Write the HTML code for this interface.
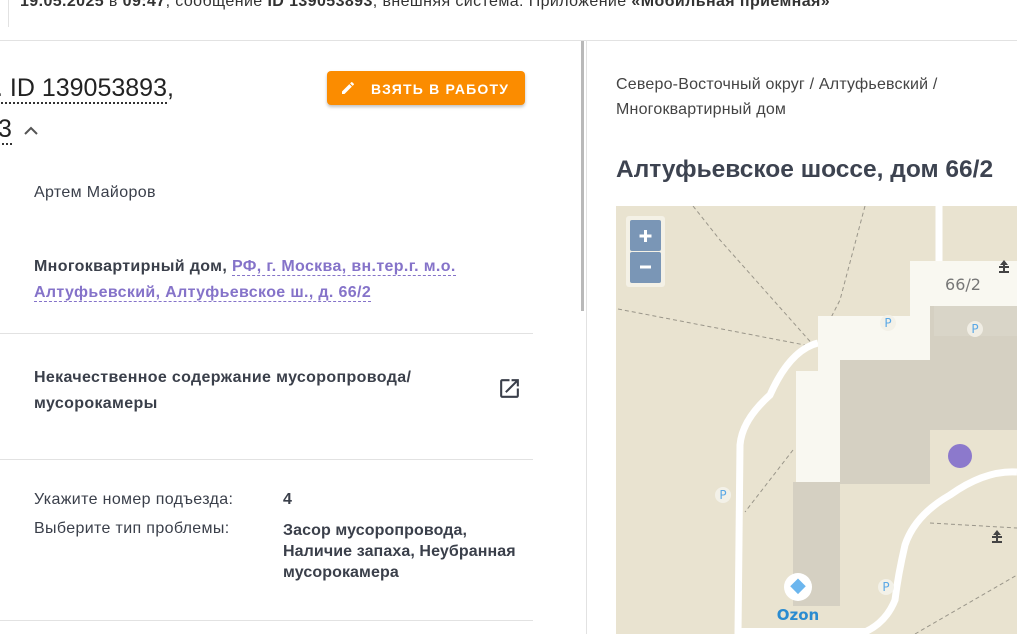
<!DOCTYPE html>
<html><head><meta charset="utf-8"><style>
*{margin:0;padding:0;box-sizing:border-box}
body{width:1017px;height:634px;overflow:hidden;background:#fff;font-family:"Liberation Sans",sans-serif;color:#3a3f4a;position:relative}
.a{position:absolute;white-space:nowrap}
.hr{position:absolute;height:1px;background:#e2e2e2}
b{font-weight:bold}
.lk{color:#8573c9;font-weight:bold;border-bottom:1px dashed #8573c9}
.t{font-size:16px;letter-spacing:0.35px}
</style></head><body>
<div class="a" style="left:8px;top:0;width:1px;height:27px;background:#e2e2e2"></div>
<div class="a" style="left:20px;top:-7px;font-size:16px;letter-spacing:0.4px;color:#333"><b>19.05.2025</b> в <b>09:47</b>, сообщение <b>ID 139053893</b>, внешняя система: Приложение <b>«Мобильная приемная»</b></div>
<div class="hr" style="left:0;top:40px;width:1017px"></div>
<div class="a" style="left:581px;top:41px;width:3px;height:270px;background:#b9b9b9"></div>
<div class="a" style="left:586px;top:41px;width:1px;height:593px;background:#e2e2e2"></div>

<div class="a" style="left:-4px;top:74px;font-size:25px;color:#222;letter-spacing:0"><span style="border-bottom:2px dotted #333">. ID 139053893</span>,</div>
<div class="a" style="left:-2px;top:115px;font-size:25px;color:#222"><span style="border-bottom:2px dotted #333">3</span></div>
<svg class="a" style="left:22px;top:124px" width="18" height="12" viewBox="0 0 18 12"><path d="M3 10L9 4L15 10" stroke="#555" stroke-width="2" fill="none"/></svg>

<div class="a" style="left:327px;top:71px;width:198px;height:34px;background:#fb8c00;border-radius:4px;box-shadow:0 2px 3px rgba(0,0,0,.25)"></div>
<svg class="a" style="left:340px;top:80px" width="16" height="16" viewBox="0 0 24 24"><path d="M3 17.25V21h3.75L17.8 9.94l-3.75-3.75L3 17.25zM20.7 7.04a1 1 0 000-1.41l-2.34-2.34a1 1 0 00-1.41 0l-1.83 1.83 3.75 3.75 1.83-1.83z" fill="#fff"/></svg>
<div class="a" style="left:371px;top:81px;font-size:14px;font-weight:bold;color:#fff;letter-spacing:1.2px">ВЗЯТЬ В РАБОТУ</div>

<div class="a t" style="left:34px;top:184px">Артем Майоров</div>
<div class="a t" style="left:34px;top:254px;line-height:26px"><b>Многоквартирный дом,</b> <span class="lk">РФ, г. Москва, вн.тер.г. м.о.</span><br><span class="lk">Алтуфьевский, Алтуфьевское ш., д. 66/2</span></div>
<div class="hr" style="left:0;top:333px;width:533px"></div>
<div class="a t" style="left:34px;top:365px;line-height:26px;font-weight:bold">Некачественное содержание мусоропровода/<br>мусорокамеры</div>
<svg class="a" style="left:497px;top:376px" width="25" height="25" viewBox="0 0 24 24"><path d="M19 19H5V5h7V3H5a2 2 0 00-2 2v14a2 2 0 002 2h14a2 2 0 002-2v-7h-2v7zM14 3v2h3.59l-9.83 9.83 1.41 1.41L19 6.41V10h2V3h-7z" fill="#3a3f4a"/></svg>
<div class="hr" style="left:0;top:459px;width:533px"></div>
<div class="a t" style="left:34px;top:491px">Укажите номер подъезда:</div>
<div class="a t" style="left:283px;top:491px;font-weight:bold">4</div>
<div class="a t" style="left:34px;top:520px">Выберите тип проблемы:</div>
<div class="a" style="left:283px;top:520px;font-size:16px;letter-spacing:0.1px;font-weight:bold;line-height:21px">Засор мусоропровода,<br>Наличие запаха, Неубранная<br>мусорокамера</div>
<div class="hr" style="left:0;top:620px;width:533px"></div>

<div class="a" style="left:616px;top:72px;font-size:16px;letter-spacing:0.2px;line-height:25px;color:#444">Северо-Восточный округ / Алтуфьевский /<br>Многоквартирный дом</div>
<div class="a" style="left:616px;top:156px;font-size:24.5px;font-weight:bold;color:#3d4350">Алтуфьевское шоссе, дом 66/2</div>

<svg class="a" style="left:616px;top:206px" width="401" height="428" viewBox="616 206 401 428">
<rect x="616" y="206" width="401" height="428" fill="#e9e3d0"/>
<g stroke="#9a968a" stroke-width="1" stroke-dasharray="4,3" fill="none">
<path d="M693 206 L720 240 L815 347"/><path d="M865 206 L840 300 L818 343"/>
<path d="M618 309 L810 346"/><path d="M793 450 L745 512"/>
<path d="M840 406 L905 362"/><path d="M930 523 L1017 528"/><path d="M915 634 L1017 575"/>
</g>
<path d="M939 206 V262" stroke="#fff" stroke-width="7"/>
<path d="M818 343 Q790 350 770 395 Q742 420 740 445 L738 634" stroke="#fff" stroke-width="7" fill="none"/>
<path d="M1017 472 Q985 470 950 495 Q915 515 905 545 Q898 575 895 600 Q885 625 860 634" stroke="#fff" stroke-width="7" fill="none"/>
<path d="M740 631 L866 631" stroke="#fff" stroke-width="6"/>
<polygon points="910,261 1017,261 1017,306 930,306 930,360 840,360 840,482 796,482 796,371 818,371 818,316 910,316" fill="#f9f8f1"/>
<rect x="930" y="306" width="87" height="124" fill="#d5d0c2"/>
<rect x="934" y="306" width="83" height="30" fill="#d9d5c8"/>
<rect x="840" y="360" width="90" height="124" fill="#d5d0c2"/>
<rect x="793" y="482" width="47" height="124" fill="#d5d0c2"/>
<text x="963" y="290" font-size="16" fill="#777" text-anchor="middle" font-family="DejaVu Sans,sans-serif">66/2</text>
<circle cx="960" cy="456" r="12" fill="#8c79cc"/>
<g font-size="12" fill="#5aa8e6" text-anchor="middle" font-family="DejaVu Sans,sans-serif">
<circle cx="888" cy="323" r="8" fill="#f3f1e8"/><text x="888" y="327">P</text>
<circle cx="975" cy="329" r="8" fill="#f0ede4"/><text x="975" y="333">P</text>
<circle cx="723" cy="495" r="8" fill="#f3f1e8"/><text x="723" y="499">P</text>
<circle cx="886" cy="587" r="8" fill="#f3f1e8"/><text x="886" y="591">P</text>
</g>
<g fill="#444"><rect x="999" y="266" width="10" height="2"/><path d="M1004 260 L1000 265 H1008Z"/><rect x="1003" y="265" width="2" height="6"/><rect x="999" y="271" width="10" height="2"/></g>
<g fill="#444"><rect x="992" y="536" width="10" height="2"/><path d="M997 530 L993 535 H1001Z"/><rect x="996" y="535" width="2" height="6"/><rect x="992" y="541" width="10" height="2"/></g>
<circle cx="798" cy="587" r="14" fill="#fff"/>
<rect x="792" y="581" width="11" height="11" fill="#6cb6ee" transform="rotate(45 798 587)"/>
<text x="798" y="620" font-size="15" font-weight="bold" fill="#2a8bd0" text-anchor="middle" font-family="DejaVu Sans,sans-serif">Ozon</text>
<rect x="626" y="216" width="39" height="71" rx="3" fill="#f4f1e6"/>
<rect x="630" y="220" width="31" height="31" rx="2" fill="#7a96b6"/>
<rect x="630" y="252" width="31" height="31" rx="2" fill="#7a96b6"/>
<path d="M645.5 230 V242 M639.5 236 H651.5" stroke="#fff" stroke-width="3"/>
<path d="M640 267 H651" stroke="#fff" stroke-width="3"/>
</svg>
</body></html>
